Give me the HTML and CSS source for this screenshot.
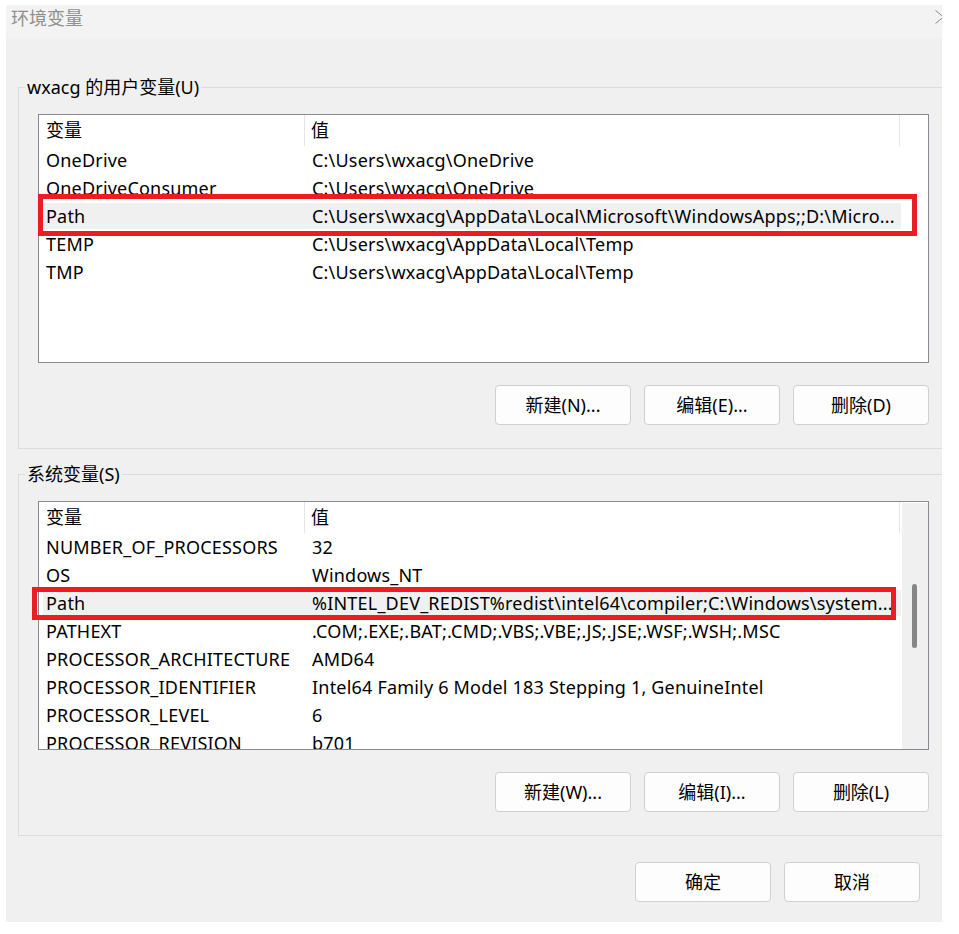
FILE: index.html
```html
<!DOCTYPE html>
<html lang="zh-CN">
<head>
<meta charset="utf-8">
<title>环境变量</title>
<link rel="stylesheet" href="styles.css">
</head>
<body>
<div class="dialog">
  <div class="titlebar">
    <span class="title">环境变量</span>
    <svg class="close" width="9" height="14" viewBox="0 0 9 14"><path d="M0.5 0.5 L8.5 7 L0.5 13.5" fill="none" stroke="#8a8a8a" stroke-width="1"/></svg>
  </div>
  <div class="content">
    <fieldset class="group">
      <legend>wxacg 的用户变量(U)</legend>
      <div class="list">
        <div class="list-main">
          <div class="list-head">
            <div class="h1">变量</div>
            <div class="h2">值</div>
          </div>
          <div class="row"><div class="c1">OneDrive</div><div class="c2">C:\Users\wxacg\OneDrive</div></div>
          <div class="row"><div class="c1">OneDriveConsumer</div><div class="c2">C:\Users\wxacg\OneDrive</div></div>
          <div class="row sel"><div class="c1">Path</div><div class="c2">C:\Users\wxacg\AppData\Local\Microsoft\WindowsApps;;D:\Micro...</div></div>
          <div class="row"><div class="c1">TEMP</div><div class="c2">C:\Users\wxacg\AppData\Local\Temp</div></div>
          <div class="row"><div class="c1">TMP</div><div class="c2">C:\Users\wxacg\AppData\Local\Temp</div></div>
        </div>
      </div>
      <div class="btns">
        <button class="btn">新建(N)...</button>
        <button class="btn">编辑(E)...</button>
        <button class="btn">删除(D)</button>
      </div>
    </fieldset>

    <fieldset class="group group2">
      <legend>系统变量(S)</legend>
      <div class="list">
        <div class="list-main">
          <div class="list-head">
            <div class="h1">变量</div>
            <div class="h2">值</div>
          </div>
          <div class="row"><div class="c1">NUMBER_OF_PROCESSORS</div><div class="c2">32</div></div>
          <div class="row"><div class="c1">OS</div><div class="c2">Windows_NT</div></div>
          <div class="row sel"><div class="c1">Path</div><div class="c2">%INTEL_DEV_REDIST%redist\intel64\compiler;C:\Windows\system...</div></div>
          <div class="row"><div class="c1">PATHEXT</div><div class="c2">.COM;.EXE;.BAT;.CMD;.VBS;.VBE;.JS;.JSE;.WSF;.WSH;.MSC</div></div>
          <div class="row"><div class="c1">PROCESSOR_ARCHITECTURE</div><div class="c2">AMD64</div></div>
          <div class="row"><div class="c1">PROCESSOR_IDENTIFIER</div><div class="c2">Intel64 Family 6 Model 183 Stepping 1, GenuineIntel</div></div>
          <div class="row"><div class="c1">PROCESSOR_LEVEL</div><div class="c2">6</div></div>
          <div class="row"><div class="c1">PROCESSOR_REVISION</div><div class="c2">b701</div></div>
        </div>
        <div class="vscroll"><div class="thumb"></div></div>
      </div>
      <div class="btns">
        <button class="btn">新建(W)...</button>
        <button class="btn">编辑(I)...</button>
        <button class="btn">删除(L)</button>
      </div>
    </fieldset>

    <div class="footer">
      <button class="btn">确定</button>
      <button class="btn">取消</button>
    </div>
  </div>
  <div class="mark mark1"></div>
  <div class="mark mark2"></div>
</div>
</body>
</html>
```

FILE: styles.css
```css
html, body {
  margin: 0;
  padding: 0;
  background: #ffffff;
}

body {
  font-family: "Noto Sans", "Noto Sans CJK SC", sans-serif;
  font-size: 18px;
  color: #000;
}

.dialog {
  position: relative;
  margin: 5px 0 0 6px;
  width: 936px;
  height: 917px;
  overflow: hidden;
  background: #f0f0f0;
}

.titlebar {
  height: 33px;
  background: #f3f3f3;
  display: flex;
  justify-content: space-between;
  align-items: flex-start;
  padding-left: 5px;
}

.title {
  font-family: "Noto Sans CJK SC", sans-serif;
  line-height: 25px;
  color: #8f8f8f;
  font-size: 18px;
}

.close {
  margin-top: 5px;
  margin-right: -2px;
  flex: none;
}

.content {
  padding-left: 12px;
}

.group {
  margin: 37px 0 0 0;
  width: 960px;
  padding: 15px 0 23px 6px;
  border: 1px solid #dcdcdc;
  box-sizing: border-box;
  min-width: 0;
}

.group2 {
  margin-top: 13px;
}

.group legend {
  padding: 0 2px;
  line-height: 24px;
  font-size: 18px;
}

.list {
  margin-left: 13px;
  width: 891px;
  height: 249px;
  box-sizing: border-box;
  border: 1px solid #868a91;
  background: #fff;
  display: flex;
  overflow: hidden;
}

.list-main {
  flex: 1;
  min-width: 0;
}

.list-head {
  height: 31px;
  display: flex;
  line-height: 31px;
}

.h1 {
  width: 266px;
  box-sizing: border-box;
  padding-left: 7px;
  border-right: 1px solid #e5e5e5;
  flex: none;
}

.h2 {
  width: 595px;
  box-sizing: border-box;
  padding-left: 6px;
  border-right: 1px solid #e5e5e5;
  flex: none;
}

.row {
  display: flex;
  height: 28px;
  box-sizing: border-box;
  padding: 1px 0;
  line-height: 26px;
  margin-left: 4px;
  width: 858px;
  white-space: nowrap;
  letter-spacing: 0.2px;
  background-clip: content-box;
}

.row.sel {
  background-color: #f0f0f0;
}

.c1 {
  width: 262px;
  box-sizing: border-box;
  padding-left: 3px;
  flex: none;
  overflow: hidden;
}

.c2 {
  flex: 1;
  padding-left: 7px;
  overflow: hidden;
}

.vscroll {
  flex: none;
  width: 26px;
  margin-top: 1px;
  background: #f0f0f0;
  box-sizing: border-box;
  padding: 81px 0 0 10px;
}

.thumb {
  width: 5px;
  height: 64px;
  border-radius: 3px;
  background: #868686;
}

.btns {
  display: flex;
  justify-content: flex-end;
  gap: 13px;
  width: 891px;
  margin: 22px 0 0 13px;
}

.btn {
  width: 136px;
  height: 40px;
  box-sizing: border-box;
  border: 1px solid #d0d0d0;
  border-radius: 4px;
  background: #fdfdfd;
  font-family: "Noto Sans", "Noto Sans CJK SC", sans-serif;
  font-size: 18px;
  color: #000;
  padding: 0;
  line-height: 38px;
}

.footer {
  display: flex;
  justify-content: flex-end;
  gap: 13px;
  margin-top: 26px;
  padding-right: 22px;
}

.mark {
  position: absolute;
  border: 5px solid #ec1c24;
  box-sizing: border-box;
}

.mark1 {
  left: 32px;
  top: 189px;
  width: 879px;
  height: 42px;
}

.mark2 {
  left: 26px;
  top: 582px;
  width: 864px;
  height: 33px;
}
```
